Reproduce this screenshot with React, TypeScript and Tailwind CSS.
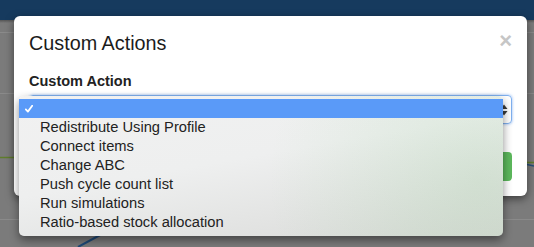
import { JSX } from "react";

const actions: string[] = [
  "Redistribute Using Profile",
  "Connect items",
  "Change ABC",
  "Push cycle count list",
  "Run simulations",
  "Ratio-based stock allocation",
];

function Backdrop(): JSX.Element {
  return (
    <div className="flex h-full flex-col">
      <div className="h-[20px] bg-[#163a5e]" />
      <div className="h-[3px] bg-gradient-to-b from-[#555] to-[#7b7b7b]" />
      <div className="h-[10px] border-b border-[#8a8a8a]" />
      <div className="h-[61px] border-b border-[#8a8a8a]" />
      <div className="h-[126px] border-b border-[#8a8a8a]" />
    </div>
  );
}

function ChartLines(): JSX.Element {
  return (
    <svg
      className="absolute left-0 top-0"
      width="534"
      height="247"
      viewBox="0 0 534 247"
    >
      <path d="M0 157.5 L40 157.5" stroke="#5f7d2c" strokeWidth="1.5" fill="none" />
      <path d="M490 162.5 L534 162.5" stroke="#5f7d2c" strokeWidth="1.5" fill="none" />
      <path d="M500 160 L520 163 L534 166" stroke="#274f78" strokeWidth="1.5" fill="none" />
      <path d="M78 247 L102 234" stroke="#1f4a78" strokeWidth="2" fill="none" />
    </svg>
  );
}

function SelectArrows(): JSX.Element {
  return (
    <svg width="8" height="12" viewBox="0 0 8 12">
      <path d="M4 0.5 L7.5 5 L0.5 5 Z" fill="#3a3a3a" />
      <path d="M4 11.5 L7.5 7 L0.5 7 Z" fill="#3a3a3a" />
    </svg>
  );
}

function Check(): JSX.Element {
  return (
    <svg width="8" height="8" viewBox="0 0 8 8">
      <path
        d="M0.8 4.4 L2.9 6.6 L7.2 0.8"
        stroke="white"
        strokeWidth="1.8"
        fill="none"
        strokeLinecap="round"
        strokeLinejoin="round"
      />
    </svg>
  );
}

export default function App(): JSX.Element {
  return (
    <div className="relative h-[247px] w-[534px] overflow-hidden bg-[#7b7b7b] font-['Liberation_Sans',Arial,sans-serif]">
      <Backdrop />
      <ChartLines />

      {/* modal */}
      <div className="absolute left-[14px] top-[16px] flex h-[180px] w-[513px] flex-col rounded-[6px] bg-white px-[15px] shadow-[0_3px_9px_rgba(0,0,0,0.5)]">
        <div className="flex items-start justify-between pt-[14px]">
          <h4 className="text-[19.8px] leading-[26px] text-[#1b1b1b]">
            Custom Actions
          </h4>
          <span className="mt-[-2px] text-[22px] font-bold leading-[26px] text-[#c6c6c6]">
            ×
          </span>
        </div>
        <label className="mt-[15px] text-[14.5px] font-bold leading-[20px] text-[#222]">
          Custom Action
        </label>
        <div className="mt-[4px] flex h-[29px] items-center justify-end rounded-[4px] border border-[#7fb0ee] pr-[3px] shadow-[0_0_3px_rgba(90,150,240,0.7)]">
          <SelectArrows />
        </div>
        <div className="mt-[28px] flex justify-end">
          <button className="h-[29px] w-[60px] rounded-[4px] bg-[#5cb85c] text-[14px] text-white">
            Run
          </button>
        </div>
      </div>

      {/* native select popup */}
      <div className="absolute left-[19px] top-[96px] w-[484px] rounded-[5px] bg-[linear-gradient(170deg,#f1f1f1_0%,#eeefef_45%,#d9dad8_100%)] pb-[4px] pt-[3px] shadow-[0_4px_10px_rgba(0,0,0,0.45)]">
        <div className="pointer-events-none absolute inset-0 rounded-[5px] bg-[radial-gradient(circle_at_95%_60%,rgba(120,200,120,0.16),rgba(120,200,120,0)_45%)]" />
        <div className="relative flex h-[19px] items-center bg-[#5a9af8] pl-[6px]">
          <Check />
        </div>
        {actions.map((item) => (
          <div
            key={item}
            className="relative h-[19px] pl-[21px] text-[14.7px] leading-[19px] text-[#222]"
          >
            {item}
          </div>
        ))}
      </div>
    </div>
  );
}
